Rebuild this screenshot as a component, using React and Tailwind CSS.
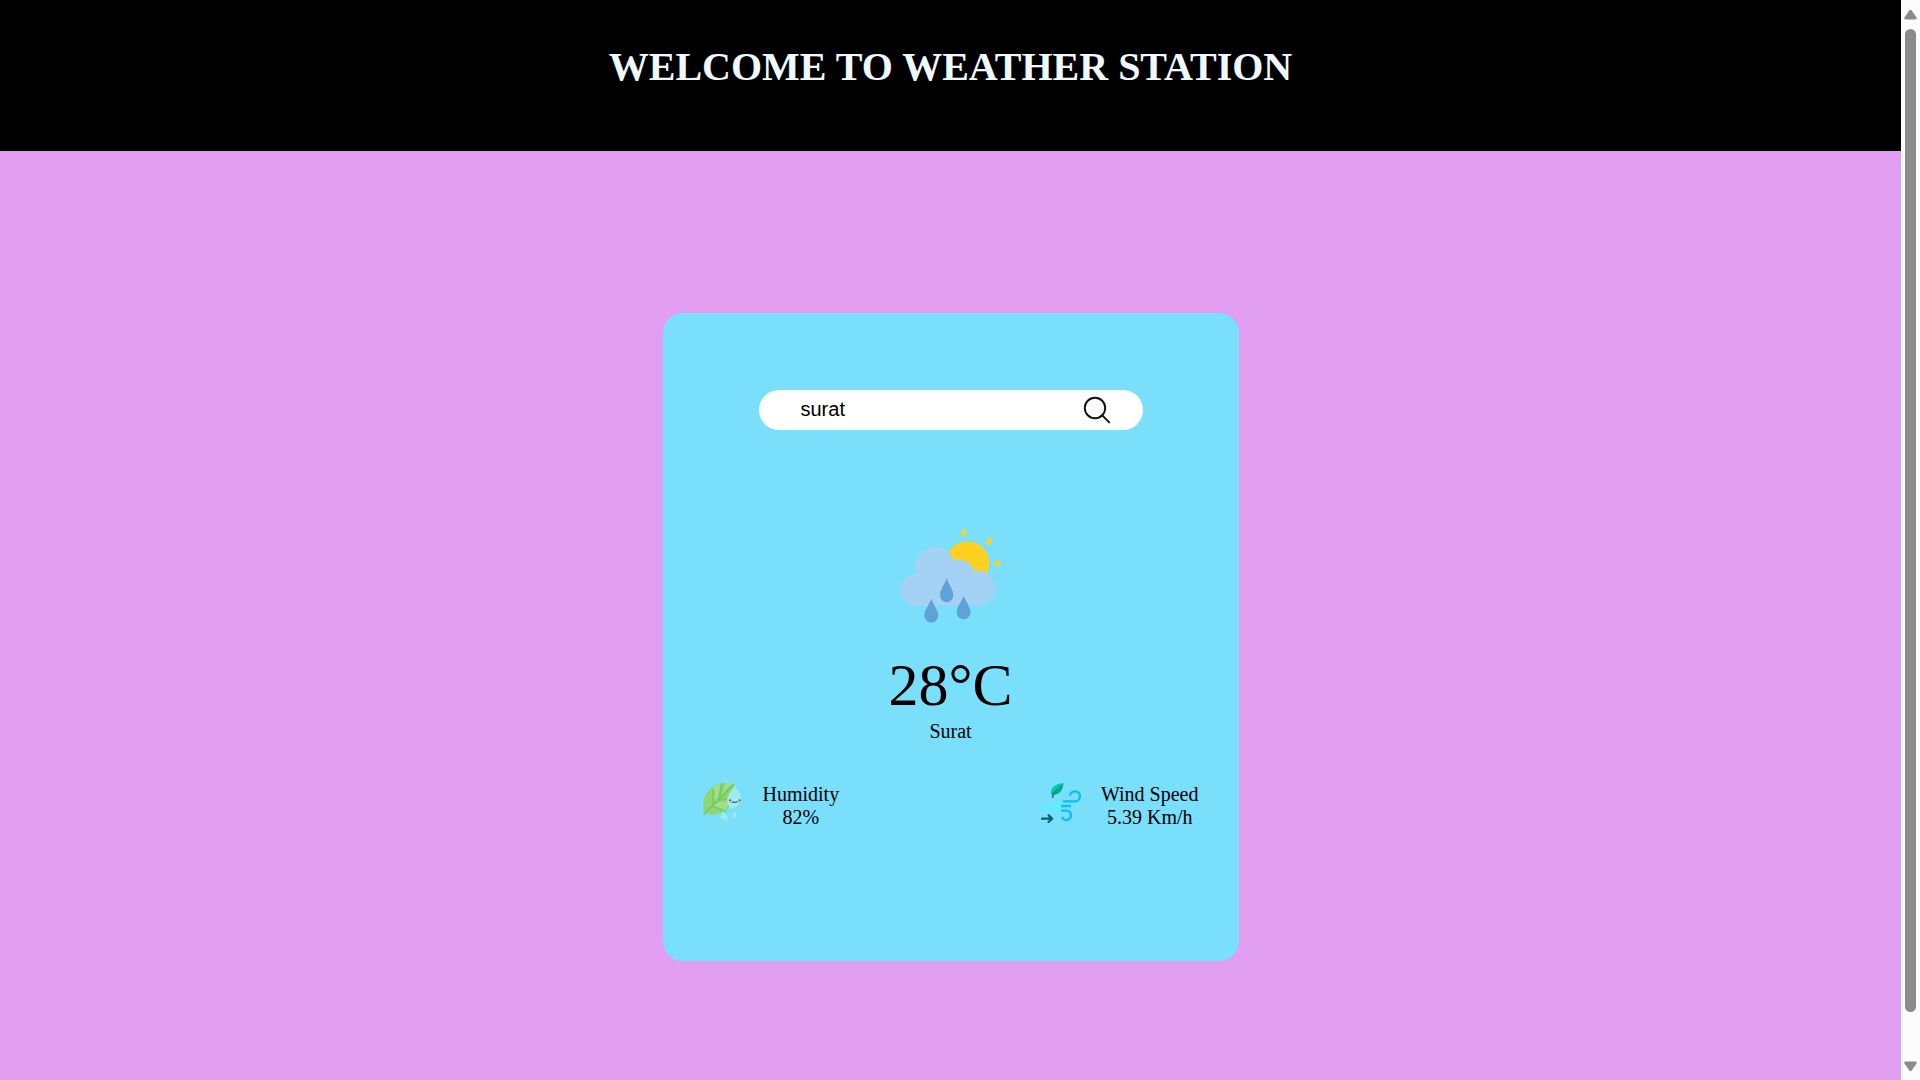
import { useState } from "react";

function SearchIcon() {
  return (
    <svg viewBox="0 0 28 28" className="size-7" fill="none" stroke="#111" strokeWidth="1.9" strokeLinecap="round" aria-hidden="true">
      <circle cx="12" cy="12" r="10.2" />
      <path d="M19.3 19.3 26.2 26.4" />
    </svg>
  );
}

function RainIcon() {
  return (
    <svg viewBox="3 0 420 390" className="h-[130px] w-[140px]" role="img" aria-label="Rain with sun">
      <g fill="#ffd01f">
        <circle cx="262" cy="160" r="66" />
        <rect x="245" y="58" width="12" height="21" rx="4" />
        <rect x="342" y="154" width="21" height="12" rx="4" />
        <rect x="316" y="88" width="23" height="12" rx="4" transform="rotate(-45 327 94)" />
      </g>
      <path
        fill="#a4d2f5"
        d="M110 288a48 48 0 0 1-1-97a60 60 0 0 1 113-41a52 52 0 0 1 61 33a53 53 0 1 1 12 105Z"
      />
      <g fill="#60a2d8">
        <path d="M200 205c5 17 20 33 20 51a20 21 0 0 1-40 0c0-18 15-34 20-51Z" />
        <path d="M154 266c5 17 21 33 21 51a21 21 0 0 1-42 0c0-18 16-34 21-51Z" />
        <path d="M251 257c5 17 21 33 21 50a21 21 0 0 1-42 0c0-17 16-33 21-50Z" />
      </g>
    </svg>
  );
}

function HumidityIcon() {
  return (
    <svg viewBox="21 21 120 120" className="size-10" aria-hidden="true">
      <path fill="#8ed573" d="M26 111C12 68 36 34 66 25c16-4 34-4 48-1c2 15 4 34-4 52c-12 30-46 50-84 35Z" />
      <path fill="#a4dd8b" d="M54 31l20-7l-8 40l-13 13ZM88 22h20L79 54ZM45 96l19-16l40-5c-6 15-13 23-23 31Z" />
      <path fill="none" stroke="#76cd60" strokeWidth="6" strokeLinecap="round" d="M24 115 112 27M52 44v43M78 23l-9 47M70 71l30-4M50 91l38 15" />
      <path fill="#a0ebef" d="M116 29c-9 13-23 28-23 46a23 24 0 0 0 46 0c0-18-14-33-23-46Z" />
      <path fill="#7fe0e9" d="M134 56c8 17 5 31-4 39c-8 6-18 5-24 1c25-3 30-19 28-40Z" />
      <path fill="#a0ebef" d="M82 105c-5 9-11 16-8 26c4 11 17 11 21 1c3-9-7-17-13-27ZM115 106c-4 8-7 12-5 18c3 7 12 7 14 0c2-6-5-11-9-18Z" />
      <path fill="#7fe0e9" d="M77 122c0 9 10 10 16 9c-4 10-18 10-20-2ZM111 118c1 7 7 7 13 6c-3 6-13 7-14-1Z" />
      <circle cx="102" cy="73" r="3" fill="#335866" />
      <circle cx="131" cy="73" r="3" fill="#335866" />
      <path fill="none" stroke="#335866" strokeWidth="3.5" strokeLinecap="round" d="M108 77q8 4 16 0" />
      <path fill="none" stroke="#f29bb0" strokeWidth="3" strokeLinecap="round" d="M101 79h3M129 79h3" />
    </svg>
  );
}

function WindIcon() {
  return (
    <svg viewBox="18 21 120 120" className="size-10" aria-hidden="true">
      <path fill="#00cba4" d="M85 21C64 23 46 34 48 52l4 7Z" />
      <path fill="#00aa8d" d="M85 21c0 21-12 36-31 36L51 53Z" />
      <path fill="none" stroke="#008b78" strokeWidth="5" strokeLinecap="round" d="M53 64c-1-8 4-14 12-22" />
      <g fill="none" strokeWidth="7">
        <path stroke="#4ff8ff" d="M60 76h15M18 90h21M47 90h31M28 104h50" />
        <path stroke="#08c0f4" d="M84 76h36a15 15 0 1 0-15-17M78 90h30M78 104h15a14 14 0 1 1-12 19" />
        <path stroke="#07617b" strokeLinecap="round" strokeLinejoin="round" d="M21 128h29M41 118l10 10-10 10" />
      </g>
    </svg>
  );
}

function Reading({ icon, label, value }) {
  return (
    <div className="flex items-start gap-5">
      {icon}
      <div>
        <p>{label}</p>
        <p>{value}</p>
      </div>
    </div>
  );
}

function ScrollTrack() {
  return (
    <div className="flex w-[19px] shrink-0 flex-col items-center bg-[#fcfcfc] pt-[9px] pb-2" aria-hidden="true">
      <svg viewBox="0 0 13 11" className="h-[11px] w-[13px]" fill="#8b8b8b">
        <path d="M5.3 1.4Q6.5 0 7.7 1.4L12.6 8.6Q13 10.5 11.5 10.5H1.5Q0 10.5.4 8.6Z" />
      </svg>
      <div className="mt-[9px] mb-[49px] w-[11px] flex-1 rounded-full bg-[#8b8b8b]" />
      <svg viewBox="0 0 13 11" className="h-[11px] w-[13px]" fill="#8b8b8b">
        <path d="M5.3 9.6Q6.5 11 7.7 9.6L12.6 2.4Q13 .5 11.5.5H1.5Q0 .5.4 2.4Z" />
      </svg>
    </div>
  );
}

export default function App() {
  const [city, setCity] = useState("surat");

  return (
    <div className="flex h-screen overflow-hidden font-['Liberation_Serif',serif] text-black">
      <div className="min-w-0 flex-1 bg-[#e29ff1]">
        <header className="bg-black px-4 pt-11 pb-[61px] text-center">
          <h1 className="text-[40px] leading-[46px] font-bold text-[#f0f8ff]">WELCOME TO WEATHER STATION</h1>
        </header>
        <main className="mx-auto mt-[162px] min-h-[648px] w-full max-w-[576px] rounded-[20px] bg-[#79dffb] px-10 pt-[77px] text-center text-xl leading-[23px]">
          <form
            className="mx-auto flex h-10 w-full max-w-96 items-center rounded-full bg-white pr-8 pl-[42px]"
            onSubmit={(e) => e.preventDefault()}
          >
            <input
              type="text"
              aria-label="City"
              value={city}
              onChange={(e) => setCity(e.target.value)}
              className="min-w-0 flex-1 bg-transparent pb-0.5 font-['Liberation_Sans',sans-serif] text-xl leading-6 outline-none"
            />
            <button type="submit" aria-label="Search" className="cursor-pointer">
              <SearchIcon />
            </button>
          </form>
          <div className="mt-20 flex justify-center">
            <RainIcon />
          </div>
          <p className="mt-[11px] text-[60px] leading-[69px]">28°C</p>
          <p>Surat</p>
          <div className="mt-10 flex justify-between">
            <Reading icon={<HumidityIcon />} label="Humidity" value="82%" />
            <Reading icon={<WindIcon />} label="Wind Speed" value="5.39 Km/h" />
          </div>
        </main>
      </div>
      <ScrollTrack />
    </div>
  );
}
